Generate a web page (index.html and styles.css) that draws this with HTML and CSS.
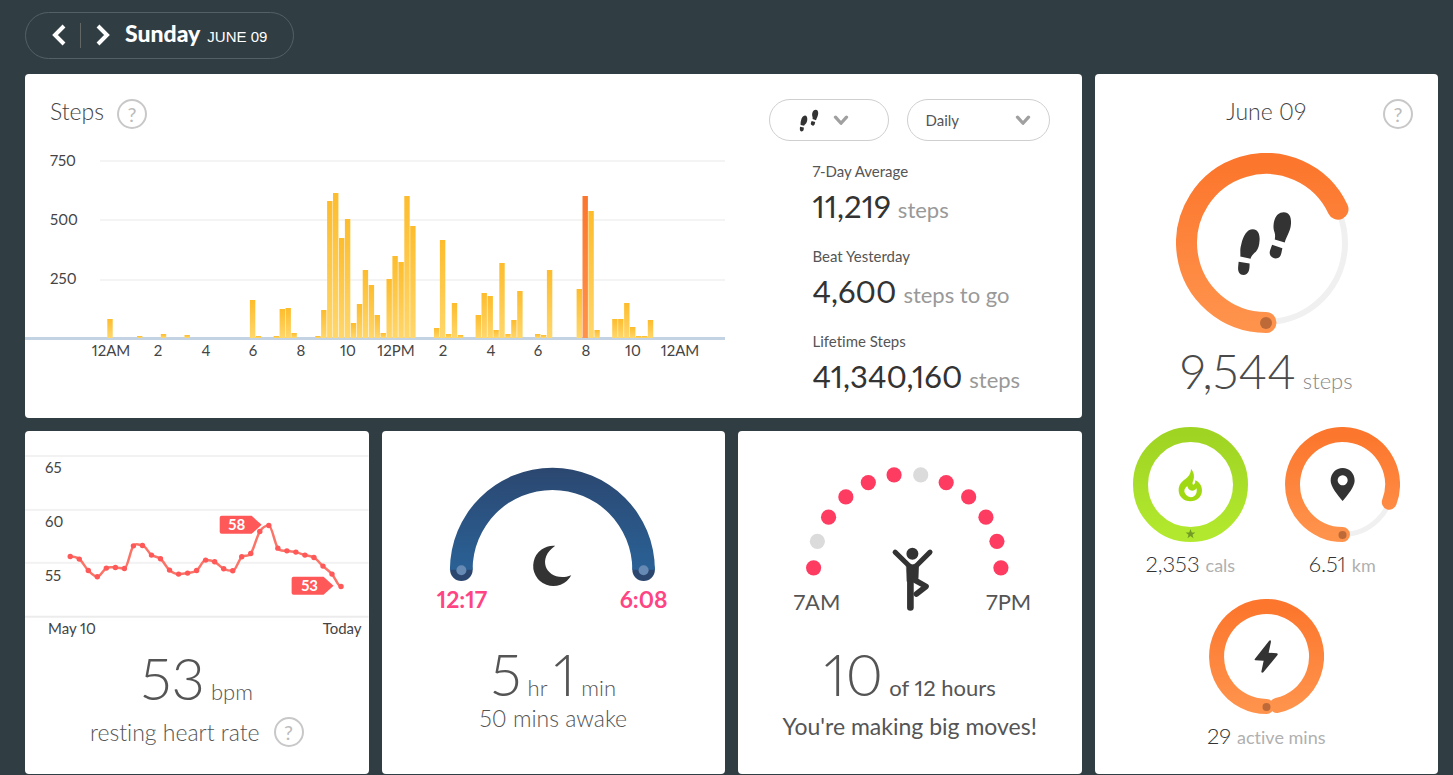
FILE: index.html
```html
<!DOCTYPE html>
<html lang="en">
<head>
<meta charset="utf-8">
<title>Dashboard</title>
<link rel="stylesheet" href="styles.css">
</head>
<body>
<svg class="defs" width="0" height="0" aria-hidden="true">
  <defs>
    <linearGradient id="orange" x1="0" y1="0" x2="0" y2="1"><stop offset="0" stop-color="#fc762d"/><stop offset="1" stop-color="#ff934c"/></linearGradient>
    <linearGradient id="green" x1="0" y1="0" x2="0" y2="1"><stop offset="0" stop-color="#9fd423"/><stop offset="1" stop-color="#b2e92e"/></linearGradient>
    <linearGradient id="yellow" x1="0" y1="0" x2="0" y2="1"><stop offset="0" stop-color="#fdbc2c"/><stop offset="1" stop-color="#ffd76c"/></linearGradient>
    <linearGradient id="night" x1="0" y1="0" x2="0" y2="1"><stop offset="0" stop-color="#2b4770"/><stop offset="1" stop-color="#2a6196"/></linearGradient>
    <symbol id="shoes" viewBox="258 390 172 200">
      <path d="M309 447C324 447 331 462 329 482C328 496 326 506 318 515C308 523 303 530 302 536L271 529C272 519 269 508 274 492C280 466 291 447 309 447Z"/>
      <path d="M266 545L299 550C299 562 299 574 290 582C284 586 272 586 268 579C262 570 265 558 266 545Z"/>
      <path d="M402 396C418 396 425 408 424 430C423 452 411 468 405 487L375 478C377 468 376 460 373 452C368 434 374 396 402 396Z"/>
      <path d="M367 494L398 504C395 514 396 522 390 530C384 537 370 537 363 528C355 518 363 506 367 494Z"/>
    </symbol>
    <symbol id="chevron" viewBox="0 0 14 10"><path d="M2 2l5 5.5L12 2" fill="none" stroke="currentColor" stroke-width="3" stroke-linecap="round" stroke-linejoin="round"/></symbol>
  </defs>
</svg>

<header class="date-nav">
  <button class="arrow" aria-label="Previous day"><svg width="14" height="22" viewBox="0 0 14 22"><path d="M12 2L3 11l9 9" fill="none" stroke="#fff" stroke-width="4"/></svg></button>
  <button class="arrow next" aria-label="Next day"><svg width="14" height="22" viewBox="0 0 14 22"><path d="M2 2l9 9-9 9" fill="none" stroke="#fff" stroke-width="4"/></svg></button>
  <h1 class="day">Sunday <span class="date">JUNE 09</span></h1>
</header>

<main class="board">
  <section class="card steps">
    <div class="chart-side">
      <div class="title-row"><h2 class="title">Steps</h2><button class="help" aria-label="About steps">?</button></div>
      <svg class="step-chart" viewBox="0 0 700 225" role="img" aria-label="Steps by time of day">
        <g fill="#f4f4f4"><rect x="75" y="15" width="625" height="2"/><rect x="75" y="74" width="625" height="2"/><rect x="75" y="134" width="625" height="2"/></g>
        <rect x="0" y="192" width="700" height="3" fill="#c3d3e3"/>
        <g id="bars"></g>
        <g class="axis"><text x="25" y="21">750</text><text x="25" y="80">500</text><text x="25" y="139">250</text></g>
        <g class="axis mid"><text x="86" y="211">12AM</text><text x="133" y="211">2</text><text x="181" y="211">4</text><text x="228" y="211">6</text><text x="276" y="211">8</text><text x="323" y="211">10</text><text x="371" y="211">12PM</text><text x="418" y="211">2</text><text x="466" y="211">4</text><text x="513" y="211">6</text><text x="561" y="211">8</text><text x="608" y="211">10</text><text x="655" y="211">12AM</text></g>
      </svg>
    </div>
    <div class="stat-side">
      <div class="controls">
        <button class="pill metric" aria-label="Choose metric"><svg class="mini-shoes" width="20" height="23"><use href="#shoes"/></svg><svg class="chev" width="16" height="11"><use href="#chevron"/></svg></button>
        <label class="pill period"><select aria-label="Period"><option>Daily</option><option>Weekly</option></select><svg class="chev" width="16" height="11"><use href="#chevron"/></svg></label>
      </div>
      <dl class="stats">
        <div><dt>7-Day Average</dt><dd>11,219 <span>steps</span></dd></div>
        <div><dt>Beat Yesterday</dt><dd>4,600 <span>steps to go</span></dd></div>
        <div><dt>Lifetime Steps</dt><dd>41,340,160 <span>steps</span></dd></div>
      </dl>
    </div>
  </section>

  <section class="card today">
    <div class="today-head"><h2 class="title">June 09</h2><button class="help" aria-label="About today">?</button></div>
    <svg class="ring-big" width="180" height="180" viewBox="0 0 180 180">
      <circle cx="90" cy="90" r="79" fill="none" stroke="#f0f0f0" stroke-width="6"/>
      <path d="M90 169.500A79.500 79.500 0 1 1 162 56.200" fill="none" stroke="url(#orange)" stroke-width="21" stroke-linecap="round"/>
      <circle cx="90" cy="170" r="6" fill="#bd6a38"/>
      <use href="#shoes" x="60" y="57" width="57" height="67" fill="#333"/>
    </svg>
    <p class="total">9,544 <span>steps</span></p>
    <div class="pair">
      <div class="metric-box">
        <svg width="115" height="115" viewBox="0 0 115 115">
          <circle cx="57.500" cy="57.500" r="50" fill="none" stroke="url(#green)" stroke-width="15"/>
          <path d="M57.500 102l1.300 3.400 3.600.1-2.900 2.200 1 3.500-3-2.100-3 2.100 1-3.500-2.900-2.200 3.600-.1z" fill="#729b26"/>
          <g transform="translate(-22 -12) scale(.3333)"><path fill="#a0d911" fill-rule="evenodd" d="M240 161C251 175 250 186 247 196C243 204 244 210 248 209C254 206 252 199 253 196C262 199 273 210 273 226C273 246 258 259 238 259C218 259 203 245 203 226C203 211 210 202 219 195C232 186 240 176 240 161ZM229 213C220 219 218 228 222 235C227 246 240 250 250 243C257 238 258 230 257 220C252 227 243 229 237 225C232 222 230 218 229 213Z"/></g>
        </svg>
        <p class="value">2,353 <span>cals</span></p>
      </div>
      <div class="metric-box">
        <svg width="115" height="115" viewBox="0 0 115 115">
          <circle cx="57.500" cy="57.500" r="50" fill="none" stroke="#f0f0f0" stroke-width="5"/>
          <path d="M57.500 107.500A50 50 0 1 1 104.300 75.200" fill="none" stroke="url(#orange)" stroke-width="15" stroke-linecap="round"/>
          <circle cx="57.500" cy="108" r="4" fill="#bd6a38"/>
          <g transform="translate(-174 -12) scale(.3333)"><path fill="#333" fill-rule="evenodd" d="M695 159C675 159 659 175 659 197C659 215 680 240 695 258C710 240 731 215 731 197C731 175 715 159 695 159ZM695 181a15 15 0 1 0 .1 0z"/></g>
        </svg>
        <p class="value">6.51 <span>km</span></p>
      </div>
    </div>
    <div class="metric-box">
      <svg width="115" height="115" viewBox="0 0 115 115">
        <path d="M57.500 107.500A50 50 0 1 1 68 106.400" fill="none" stroke="url(#orange)" stroke-width="15" stroke-linecap="round"/>
        <circle cx="57.500" cy="108" r="4" fill="#bd6a38"/>
        <g transform="translate(-28 -9) scale(.3333)"><path fill="#333" d="M264 153q5-5 6 2L263 188 288 190q4 2 1 6L247 247q-5 3-6-2L248 212 223 211q-4-1-1-5Z"/></g>
      </svg>
      <p class="value">29 <span>active mins</span></p>
    </div>
  </section>

  <section class="card heart">
    <svg class="panel" viewBox="0 0 344 210" role="img" aria-label="Resting heart rate over 30 days">
      <g fill="#f2f2f2"><rect y="24" width="344" height="2"/><rect y="78" width="344" height="2"/><rect y="131" width="344" height="2"/></g>
      <rect y="185" width="344" height="2" fill="#ececec"/>
      <g id="pulse"></g>
      <g fill="#ff5858"><path d="M197 85h30l10 9-10 9h-30q-2 0-2-2v-14q0-2 2-2z"/><path d="M269 146h30l10 9-10 9h-30q-2 0-2-2v-14q0-2 2-2z"/></g>
      <g class="tag"><text x="212" y="99">58</text><text x="285" y="160">53</text></g>
      <g class="axis"><text x="20" y="42">65</text><text x="20" y="96">60</text><text x="20" y="150">55</text><text x="23" y="203">May 10</text><text x="337" y="203" text-anchor="end">Today</text></g>
    </svg>
    <p class="big">53 <span>bpm</span></p>
    <div class="caption with-help"><span>resting heart rate</span><button class="help" aria-label="About resting heart rate">?</button></div>
  </section>

  <section class="card sleep">
    <svg class="panel" viewBox="0 0 344 206" role="img" aria-label="Sleep from 12:17 to 6:08">
      <g fill="#2b4770"><circle cx="79.500" cy="139" r="11.300"/><circle cx="262" cy="139" r="11.300"/></g>
      <path d="M68 139A102.500 102 0 0 1 273.300 139H250.700A80 80 0 0 0 90.700 139Z" fill="url(#night)"/>
      <g fill="#668ab4"><circle cx="79.500" cy="139.500" r="5"/><circle cx="262" cy="139.500" r="5"/></g>
      <path d="M173.500 115A20.200 20.200 0 1 0 189.500 144.500C168 153 152 130 173.500 115Z" fill="#333"/>
      <g class="times"><text x="80" y="177">12:17</text><text x="262" y="177">6:08</text></g>
    </svg>
    <p class="big">5 <span>hr</span> <b>1</b> <span>min</span></p>
    <p class="caption">50 mins awake</p>
  </section>

  <section class="card active">
    <svg class="panel" viewBox="0 0 344 206" role="img" aria-label="Active hours from 7AM to 7PM">
      <g fill="#fe3b61">
        <circle cx="75.700" cy="137" r="7.600"/><circle cx="90.700" cy="86.300" r="7.600"/><circle cx="108" cy="66" r="7.600"/><circle cx="130.500" cy="51.700" r="7.600"/><circle cx="156.300" cy="44" r="7.600"/><circle cx="208.500" cy="51.700" r="7.600"/><circle cx="231" cy="66" r="7.600"/><circle cx="248.300" cy="86.300" r="7.600"/><circle cx="259.300" cy="110.500" r="7.600"/><circle cx="263.300" cy="137" r="7.600"/>
      </g>
      <g fill="#dcdbdc"><circle cx="79.500" cy="110.500" r="7.600"/><circle cx="183" cy="44" r="7.600"/></g>
      <g transform="translate(2 -6) scale(.3333)" fill="#333" stroke="#333" stroke-linecap="round" stroke-linejoin="round">
        <path d="M500 412Q518 428 537 412L535 462 503 470Z" stroke-width="2"/>
        <path d="M466 382L508 423M571 382L530 423" stroke-width="15" fill="none"/>
        <path d="M512 430V548" stroke-width="20" fill="none"/>
        <path d="M522 464L559 485L530 508" stroke-width="17" fill="none"/>
        <circle cx="518" cy="387" r="21" stroke="#fff" stroke-width="6"/>
      </g>
      <g class="hours"><text x="79" y="179">7AM</text><text x="271" y="179">7PM</text></g>
    </svg>
    <p class="big">10 <span class="strong">of 12 hours</span></p>
    <p class="caption strong">You're making big moves!</p>
  </section>
</main>
<script src="charts.js"></script>
</body>
</html>
```
FILE: styles.css
```css
* { box-sizing: border-box; }
body { margin: 0; padding: 12px 15px 1px 25px; background: #303e44; color: #4a4a4a; font-family: Lato, "Open Sans", sans-serif; font-weight: 300; font-variant-numeric: proportional-nums; font-variant-ligatures: none; }
h1, h2, p, dl, dd { margin: 0; font-weight: 300; }
button, select { font: inherit; color: inherit; background: none; border: 0; padding: 0; cursor: pointer; }
.defs { position: absolute; }
svg { display: block; }

.date-nav { display: inline-flex; align-items: center; height: 47px; padding: 0 26px; border: 1px solid #536166; border-radius: 24px; color: #fff; }
.arrow { height: 25px; padding: 0 14px 2px 0; display: flex; align-items: center; }
.arrow.next { padding: 0 15px 2px; border-left: 1px solid #626765; }
.day { display: flex; align-items: baseline; gap: 7px; padding-bottom: 6px; font-size: 23px; line-height: 30px; font-weight: 900; }
.date { font: 400 15px "Liberation Sans", sans-serif; }

.board { display: grid; grid-template-columns: repeat(4, minmax(0, 1fr)); gap: 13px; margin-top: 15px; }
.card { background: #fff; border-radius: 4px; min-height: 343px; overflow: hidden; }
.steps { grid-column: 1 / 4; min-height: 344px; display: flex; justify-content: space-between; }
.today { grid-column: 4; grid-row: 1 / 3; display: flex; flex-direction: column; align-items: center; padding-top: 25px; }

.title { font-size: 23px; line-height: 25px; color: #444; }
.help { flex: none; width: 30px; height: 30px; border: 2px solid #c8c8c8; border-radius: 50%; color: #bbb; font-size: 20px; line-height: 26px; font-weight: 400; text-align: center; }
.title-row { display: flex; align-items: flex-start; gap: 13px; padding: 25px 25px 0; height: 71px; }
.chart-side { flex: 0 1 700px; min-width: 0; }
.step-chart { width: 100%; height: auto; }
.axis { font-size: 15px; font-weight: 400; fill: #444; }
.mid { text-anchor: middle; }

.stat-side { padding: 25px 32px 0 0; }
.controls { display: flex; gap: 18px; }
.pill { display: flex; align-items: center; height: 42px; border: 1px solid #cfcfcf; border-radius: 21px; font-size: 15px; font-weight: 400; color: #555; }
.metric { width: 120px; justify-content: center; gap: 14px; padding-right: 9px; }
.mini-shoes { fill: #333; }
.chev { flex: none; color: #a0a0a0; pointer-events: none; }
.period { width: 143px; padding: 0 18px; }
.period select { flex: 1; appearance: none; outline: 0; height: 40px; }
.stats { display: flex; flex-direction: column; gap: 17px; padding: 20px 0 0 44px; }
dt { font-size: 15px; line-height: 20px; font-weight: 400; color: #555; }
dd { display: flex; align-items: baseline; gap: 7px; height: 48px; font-size: 31px; line-height: 50px; font-weight: 400; color: #333; }
dd span { font-size: 22px; line-height: 26px; color: #999; }

.today-head { align-self: stretch; display: grid; grid-template-columns: 1fr auto 1fr; padding: 0 25px; margin-bottom: 24px; }
.today-head .title { grid-column: 2; }
.today-head .help { justify-self: end; }
.total { display: flex; align-items: baseline; gap: 7px; margin: 10px 0 28px; font-size: 48px; line-height: 56px; }
.total span { font-size: 22px; line-height: 26px; color: #888; }
.pair { display: flex; gap: 37px; margin-bottom: 20px; }
.metric-box { display: flex; flex-direction: column; align-items: center; }
.value { margin-top: 7px; font-size: 22px; line-height: 30px; color: #333; white-space: nowrap; }
.value span { font-size: 18px; line-height: 22px; font-weight: 400; color: #b0b0b0; }

.panel { width: 100%; height: auto; }
.tag { font-size: 15px; font-weight: 700; fill: #fff; text-anchor: middle; }
.times { font-size: 23px; font-weight: 700; fill: #ff4484; text-anchor: middle; }
.hours { font-size: 22px; font-weight: 400; fill: #555; text-anchor: middle; }
.big { display: flex; justify-content: center; align-items: baseline; gap: 6px; margin-top: 9px; font-size: 58px; line-height: 56px; color: #555; }
.big b { font-weight: 300; }
.big span { font-size: 22px; line-height: 26px; }
.big .strong, .caption.strong { font-weight: 400; color: #555; }
.caption { font-size: 23px; line-height: 32px; color: #555; text-align: center; }
.heart .caption { display: flex; justify-content: center; align-items: center; gap: 14px; margin-top: 10px; }
.caption.strong { margin-top: 8px; }
```
FILE: charts.js
```js
// Quarter-hour slots: [slot, bar height]
const steps = [[0,19],[5,2],[9,4],[13,3],[24,38],[25,2],[28,2],[29,29],[30,30],[31,5],[35,2],[36,28],[37,137],[38,145],[39,100],[40,119],[41,15],[42,34],[43,68],[44,53],[45,23],[46,5],[47,59],[48,82],[49,76],[50,142],[51,112],[55,10],[56,98],[57,4],[58,35],[59,3],[62,23],[63,45],[64,42],[65,8],[66,75],[67,4],[68,18],[69,47],[72,4],[73,3],[74,68],[79,49],[80,142],[81,127],[82,8],[85,19],[86,19],[87,35],[88,11],[89,2],[90,2],[91,18]];
document.getElementById("bars").innerHTML = steps.map(([slot, h]) =>
  `<rect x="${(82.3 + slot * 5.94).toFixed(1)}" y="${193 - h}" width="5.400" height="${h}" fill="url(#${slot === 80 ? "orange" : "yellow"})"/>`).join("");

const pulse = [125.7,128.3,139.7,146,137.3,136.7,137.7,115,114.7,124.3,128,139.3,143.3,142.3,139.7,129.3,131,138,140,126,122.7,100.7,94.7,117.3,120,121.3,124.3,126.7,135.3,143.3,155.7];
const px = i => 45.3 + i * 9.04;
let line = `M${px(0)} ${pulse[0]}`;
for (let i = 1; i < pulse.length; i++) {
  const slope = k => k > 0 && k < pulse.length - 1 && (pulse[k] - pulse[k - 1]) * (pulse[k + 1] - pulse[k]) > 0 ? (pulse[k + 1] - pulse[k - 1]) / 6 : 0;
  line += `C${px(i - 1) + 3} ${pulse[i - 1] + slope(i - 1)} ${px(i) - 3} ${pulse[i] - slope(i)} ${px(i)} ${pulse[i]}`;
}
document.getElementById("pulse").innerHTML = `<path d="${line}" fill="none" stroke="#fb7468" stroke-width="2.500"/>` +
  pulse.map((y, i) => `<circle cx="${px(i)}" cy="${y}" r="2.700" fill="#ff5858"/>`).join("");
```
